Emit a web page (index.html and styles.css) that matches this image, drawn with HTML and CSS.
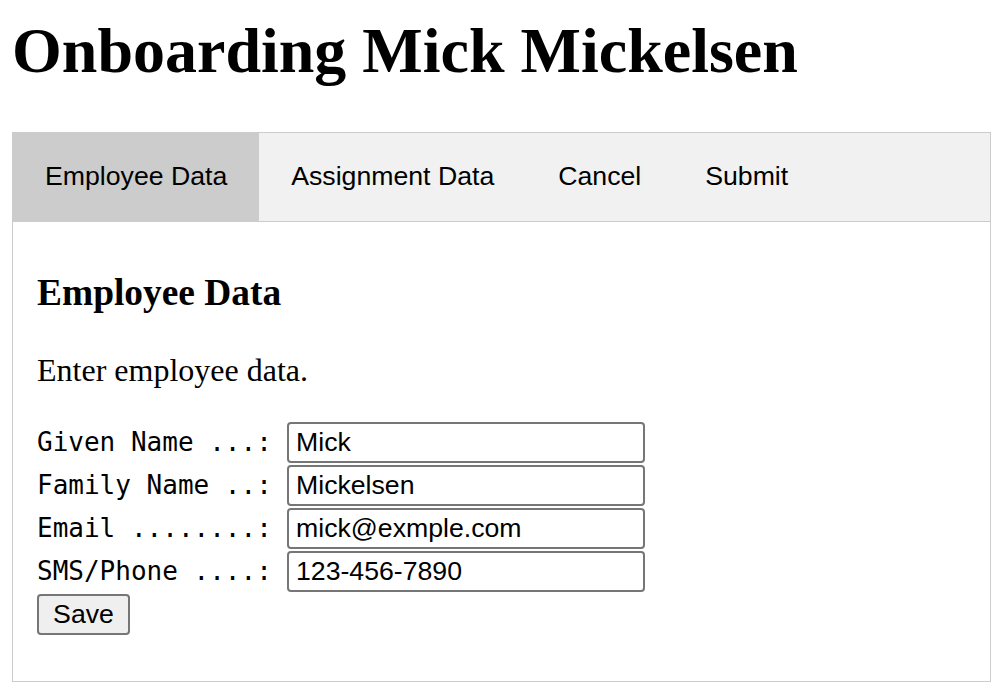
FILE: index.html
```html
<!DOCTYPE html>
<html>
<head>
<meta charset="utf-8">
<title>Onboarding Mick Mickelsen</title>
<link rel="stylesheet" href="styles.css">
</head>
<body>
<h1 class="title">Onboarding Mick Mickelsen</h1>
<div class="tabs">
  <button class="tab active">Employee Data</button>
  <button class="tab">Assignment Data</button>
  <button class="tab">Cancel</button>
  <button class="tab">Submit</button>
</div>
<div class="tab-content">
  <h3 class="section-title">Employee Data</h3>
  <p class="intro">Enter employee data.</p>
  <form class="form">
    <div class="row"><label class="label">Given Name ...:</label><input class="field" type="text" value="Mick"></div>
    <div class="row"><label class="label">Family Name ..:</label><input class="field" type="text" value="Mickelsen"></div>
    <div class="row"><label class="label">Email ........:</label><input class="field" type="text" value="mick@exmple.com"></div>
    <div class="row"><label class="label">SMS/Phone ....:</label><input class="field" type="text" value="123-456-7890"></div>
    <div class="row"><button type="button" class="save">Save</button></div>
  </form>
</div>
</body>
</html>
```
FILE: styles.css
```css
html, body {
  background: #fff;
}
body {
  margin: 0 8px 0 12px;
  font-family: "Liberation Serif", serif;
  font-size: 32px;
  color: #000;
}
.title {
  font-family: "Liberation Serif", serif;
  font-weight: bold;
  font-size: 64px;
  line-height: normal;
  margin: 14px 0 44px;
}
.tabs {
  display: flex;
  border: 1px solid #ccc;
  background: #f1f1f1;
}
.tab {
  font-family: "Liberation Sans", Arial, sans-serif;
  font-size: 26.67px;
  line-height: 32px;
  padding: 27px 32px 29px;
  border: none;
  outline: none;
  background: inherit;
  color: #000;
  cursor: pointer;
  margin: 0;
}
.tab.active {
  background: #ccc;
}
.tab-content {
  border: 1px solid #ccc;
  border-top: none;
  padding: 12px 24px;
}
.section-title {
  font-family: "Liberation Serif", serif;
  font-weight: bold;
  font-size: 37.44px;
  line-height: normal;
  margin: 37.44px 0;
}
.intro {
  font-size: 32px;
  line-height: normal;
  margin: 32px 0;
}
.form {
  display: flex;
  flex-direction: column;
  margin: 0 0 33px;
}
.row {
  display: flex;
  align-items: center;
  height: 43px;
}
.label {
  font-family: "DejaVu Sans Mono", monospace;
  font-size: 26px;
  width: 250px;
  flex: none;
}
.field {
  box-sizing: border-box;
  width: 358px;
  height: 41px;
  margin: 0;
  padding: 2px 7px;
  font-family: "Liberation Sans", Arial, sans-serif;
  font-size: 26.67px;
  color: #000;
  background: #fff;
  border: 2px solid #767676;
  border-radius: 4px;
}
.save {
  box-sizing: border-box;
  height: 41px;
  width: 93px;
  margin: 0;
  padding: 2px 12px;
  font-family: "Liberation Sans", Arial, sans-serif;
  font-size: 26.67px;
  color: #000;
  background: #efefef;
  border: 2px solid #767676;
  border-radius: 4px;
}
```
